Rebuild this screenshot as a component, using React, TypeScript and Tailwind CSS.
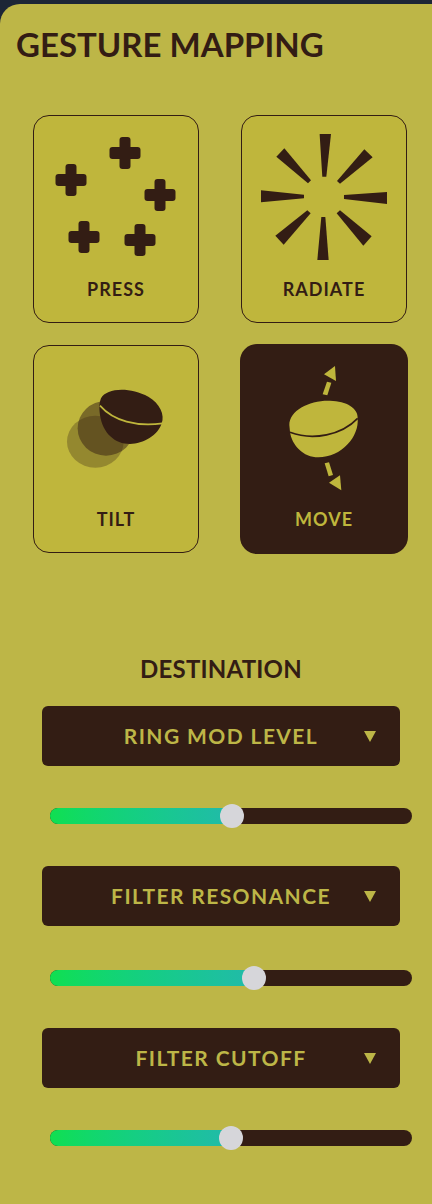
import React from "react";

const DARK = "#331d14";
const OLIVE = "#bfb63c";

const Press = () => {
  const spots = [
    [91, 37],
    [37, 64],
    [126, 79],
    [50, 121],
    [106, 124],
  ];
  return (
    <svg width="164" height="160" viewBox="0 0 164 160" fill={DARK}>
      {spots.map(([x, y]) => (
        <g key={`${x}-${y}`}>
          <rect x={x - 5.5} y={y - 16} width="11" height="32" rx="3" />
          <rect x={x - 15.5} y={y - 6} width="31" height="12" rx="3" />
        </g>
      ))}
    </svg>
  );
};

const Radiate = () => (
  <svg width="164" height="160" viewBox="0 0 164 160" fill={DARK}>
    <g transform="scale(0.3333) translate(-78 -48)">
      <polygon points="311,102 345,102 331,230 319,230" />
      <polygon points="445,148 470,172 372,251 363,243" />
      <polygon points="513,276 513,312 384,297 384,285" />
      <polygon points="442,437 467,409 372,331 362,340" />
      <polygon points="304,480 338,480 328,351 316,351" />
      <polygon points="178,407 203,434 284,340 274,331" />
      <polygon points="135,271 135,307 264,295 264,284" />
      <polygon points="205,145 181,170 276,250 285,241" />
    </g>
  </svg>
);

const Tilt = () => (
  <svg width="164" height="160" viewBox="0 0 164 160">
    <g transform="scale(0.3333) translate(-42 -33)">
      <ellipse cx="226" cy="320" rx="85" ry="78" fill={DARK} opacity="0.3" />
      <ellipse cx="258" cy="280" rx="85" ry="82" fill={DARK} opacity="0.5" />
      <path
        d="M243,190 C260,158 330,155 385,185 C420,205 435,240 425,265 C415,300 370,327 330,327 C285,327 248,295 240,240 C237,215 238,205 243,190 Z"
        fill={DARK}
      />
      <path d="M240,212 C280,258 350,276 428,265" fill="none" stroke={OLIVE} strokeWidth="5" />
    </g>
  </svg>
);

const Move = () => (
  <svg width="164" height="160" viewBox="0 0 164 160" fill={OLIVE}>
    <g transform="scale(0.3333) translate(-36 -33)">
      <polygon points="315,93 318,138 282,118" />
      <polygon points="291,140 304,143 292,181 278,178" />
      <path d="M178,270 C178,225 240,195 300,197 C350,198 385,220 383,250 C388,305 335,367 265,367 C220,367 185,330 180,290 Z" />
      <path d="M180,292 C250,318 335,300 383,250" fill="none" stroke={DARK} strokeWidth="5" />
      <polygon points="284,385 297,382 309,420 296,424" />
      <polygon points="330,421 334,466 297,443" />
    </g>
  </svg>
);

const gestures = [
  { name: "PRESS", icon: <Press />, active: false },
  { name: "RADIATE", icon: <Radiate />, active: false },
  { name: "TILT", icon: <Tilt />, active: false },
  { name: "MOVE", icon: <Move />, active: true },
];

const destinations = [
  { name: "RING MOD LEVEL", thumb: 182, selectGap: "mt-0", sliderGap: "mt-[42px]" },
  { name: "FILTER RESONANCE", thumb: 204, selectGap: "mt-[42px]", sliderGap: "mt-[44px]" },
  { name: "FILTER CUTOFF", thumb: 181, selectGap: "mt-[42px]", sliderGap: "mt-[42px]" },
];

export default function App() {
  return (
    <div className="h-[1204px] w-[432px] overflow-hidden bg-[#1c2636] pt-1 font-['Lato',sans-serif] font-bold text-[#331d14]">
      <div className="h-[1200px] rounded-tl-[20px] bg-[#bdb647] pt-5">
        <h1 className="ml-4 text-[33px] leading-10 font-bold whitespace-nowrap">GESTURE MAPPING</h1>

        <div className="mt-[51px] ml-[33px] grid w-[374px] grid-cols-2 gap-x-[42px] gap-y-[22px]">
          {gestures.map((g) => (
            <div
              key={g.name}
              className={
                g.active
                  ? "flex h-[208px] w-[166px] flex-col items-center rounded-2xl border border-[#331d14] bg-[#331d14] text-[#bfb63c] ring-1 ring-[#331d14]"
                  : "flex h-[208px] w-[166px] flex-col items-center rounded-2xl border border-[#331d14] bg-[#bfb63c]"
              }
            >
              <div className="h-[160px] w-[164px] shrink-0">{g.icon}</div>
              <span className="mt-px text-lg leading-6 tracking-[1px]">{g.name}</span>
            </div>
          ))}
        </div>

        <div className="mt-[100px] ml-[42px] w-[358px]">
          <h2 className="text-center text-2xl leading-8 font-bold tracking-[0.2px]">DESTINATION</h2>
          <div className="mt-[21px]">
            {destinations.map((d) => (
              <div key={d.name}>
                <div
                  className={`${d.selectGap} relative flex h-[60px] items-center justify-center rounded-md bg-[#331d14] pb-px text-[21px] tracking-[1.4px] text-[#bdb647]`}
                >
                  {d.name}
                  <svg className="absolute top-[25px] left-[322px]" width="12" height="11" viewBox="0 0 12 11">
                    <polygon points="0,0 12,0 6,11" fill="#bdb647" />
                  </svg>
                </div>
                <div className={`${d.sliderGap} relative ml-2 h-4 w-[362px] rounded-full bg-[#331d14]`}>
                  <div
                    className="h-4 rounded-full bg-gradient-to-r from-[#10df50] to-[#22b9ab]"
                    style={{ width: d.thumb + 4 }}
                  />
                  <div
                    className="absolute -top-1 h-6 w-6 rounded-full bg-[#d6d6da]"
                    style={{ left: d.thumb - 12 }}
                  />
                </div>
              </div>
            ))}
          </div>
        </div>
      </div>
    </div>
  );
}
